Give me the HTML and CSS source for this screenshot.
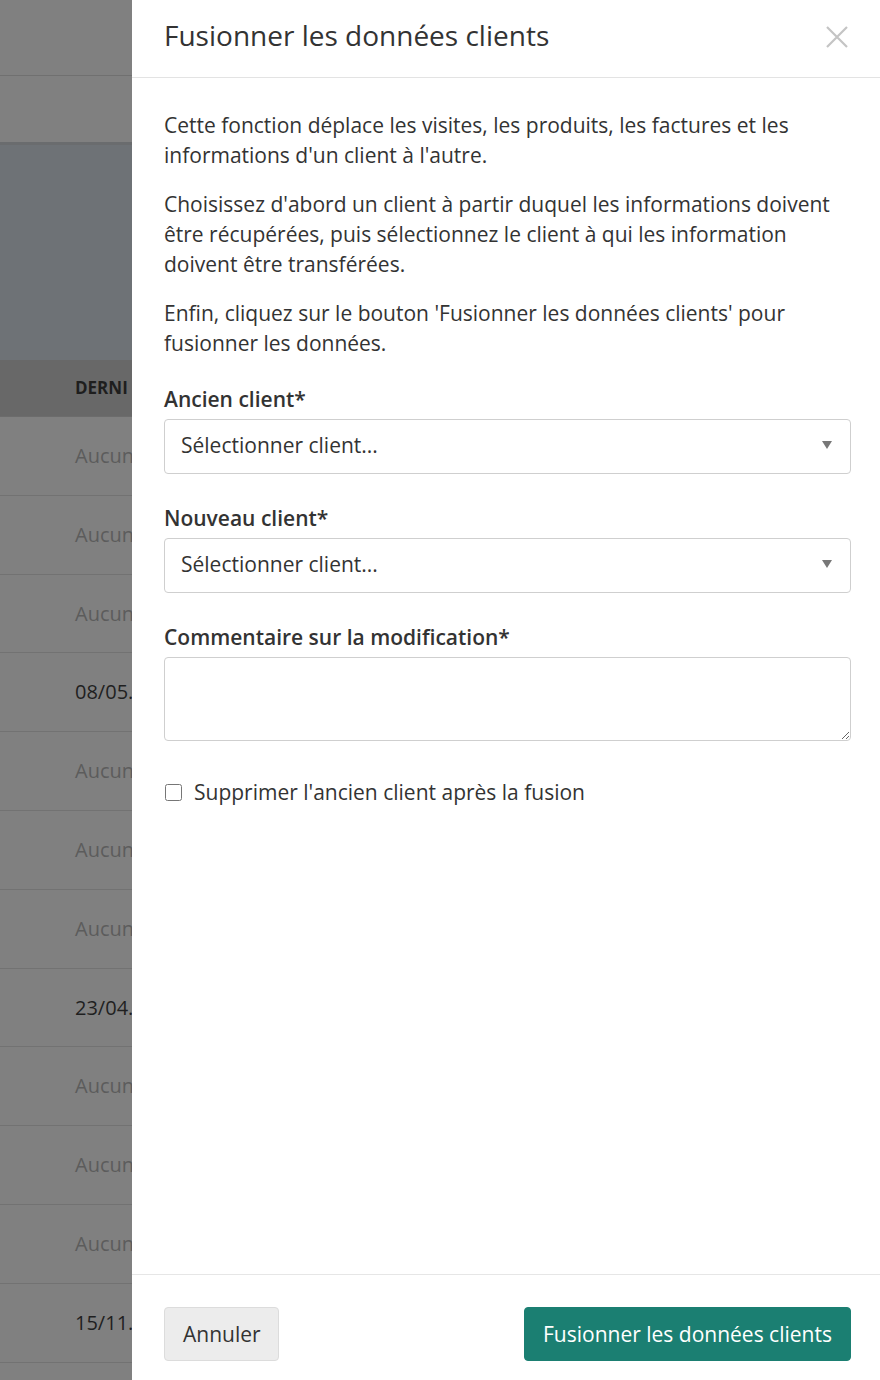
FILE: index.html
```html
<!DOCTYPE html>
<html lang="fr">
<head>
<meta charset="utf-8">
<title>Fusionner les données clients</title>
<link rel="stylesheet" href="styles.css">
</head>
<body>
<div class="backdrop">
  <div class="bg-top"></div>
  <div class="bg-bar"></div>
  <div class="bg-hero"></div>
  <div class="bg-head">DERNI</div>
  <div class="bg-row muted">Aucun</div>
  <div class="bg-row muted">Aucun</div>
  <div class="bg-row muted">Aucun</div>
  <div class="bg-row">08/05.</div>
  <div class="bg-row muted">Aucun</div>
  <div class="bg-row muted">Aucun</div>
  <div class="bg-row muted">Aucun</div>
  <div class="bg-row">23/04.</div>
  <div class="bg-row muted">Aucun</div>
  <div class="bg-row muted">Aucun</div>
  <div class="bg-row muted">Aucun</div>
  <div class="bg-row">15/11.</div>
</div>
<div class="panel">
  <div class="panel-header">
    <h1 class="panel-title">Fusionner les données clients</h1>
    <button class="close" aria-label="Fermer">
      <svg width="24" height="24" viewBox="0 0 24 24"><path d="M2 2L22 22M22 2L2 22" stroke="#c4c4c4" stroke-width="2.2" fill="none"/></svg>
    </button>
  </div>
  <div class="panel-body">
    <p class="text">Cette fonction déplace les visites, les produits, les factures et les informations d'un client à l'autre.</p>
    <p class="text">Choisissez d'abord un client à partir duquel les informations doivent être récupérées, puis sélectionnez le client à qui les information doivent être transférées.</p>
    <p class="text last">Enfin, cliquez sur le bouton 'Fusionner les données clients' pour fusionner les données.</p>

    <label class="field-label">Ancien client*</label>
    <div class="select"><span>Sélectionner client...</span><span class="caret"></span></div>

    <label class="field-label">Nouveau client*</label>
    <div class="select"><span>Sélectionner client...</span><span class="caret"></span></div>

    <label class="field-label">Commentaire sur la modification*</label>
    <textarea class="textarea"></textarea>

    <label class="check"><input type="checkbox" class="checkbox"><span>Supprimer l'ancien client après la fusion</span></label>
  </div>
  <div class="panel-footer">
    <button class="btn btn-cancel">Annuler</button>
    <button class="btn btn-primary">Fusionner les données clients</button>
  </div>
</div>
</body>
</html>
```
FILE: styles.css
```css
* { box-sizing: border-box; }
html, body { margin: 0; padding: 0; }
body {
  width: 880px;
  height: 1380px;
  overflow: hidden;
  display: flex;
  font-family: "Open Sans", "Noto Sans", sans-serif;
  color: #333;
}
.backdrop {
  width: 132px;
  flex: none;
  background: #808080;
  display: flex;
  flex-direction: column;
  overflow: hidden;
}
.bg-top { height: 76px; border-bottom: 1px solid #707070; flex: none; }
.bg-bar { height: 69px; border-bottom: 3px solid #6a6c6e; flex: none; }
.bg-hero { height: 215px; background: #6e7276; flex: none; }
.bg-head {
  height: 57px;
  flex: none;
  background: #686868;
  border-bottom: 1px solid #6c6c6c;
  padding-left: 75px;
  font-size: 17px;
  font-weight: 700;
  color: #1e1e1e;
  line-height: 56px;
  white-space: nowrap;
}
.bg-row {
  height: 78.8px;
  flex: none;
  border-bottom: 1px solid #727272;
  padding-left: 75px;
  font-size: 20px;
  line-height: 78px;
  color: #1f1f1f;
  white-space: nowrap;
}
.bg-row.muted { color: #5c5c5c; }

.panel {
  flex: 1;
  height: 1380px;
  background: #fff;
  display: flex;
  flex-direction: column;
}
.panel-header {
  height: 78px;
  flex: none;
  border-bottom: 1px solid #e3e3e3;
  display: flex;
  align-items: center;
  justify-content: space-between;
  padding: 0 31px 8px 32px;
}
.panel-title {
  margin: 0;
  font-size: 28px;
  font-weight: 400;
  color: #333;
}
.close {
  border: 0;
  background: none;
  padding: 0;
  width: 24px;
  height: 24px;
  display: flex;
  cursor: pointer;
  margin-top: 4px;
}
.panel-body {
  flex: 1;
  padding: 32px 29px 0 32px;
  display: flex;
  flex-direction: column;
}
.text {
  margin: 0 0 19px;
  font-size: 21px;
  line-height: 30px;
  color: #333;
}
.text.last { margin-bottom: 26px; }
.field-label {
  font-size: 21px;
  line-height: 30px;
  font-weight: 600;
  color: #333;
  margin-bottom: 5px;
}
.select {
  height: 55px;
  border: 1px solid #cfcfcf;
  border-radius: 4px;
  display: flex;
  align-items: center;
  justify-content: space-between;
  padding: 0 18px 3px 16px;
  font-size: 21px;
  color: #333;
  margin-bottom: 29px;
}
.caret {
  width: 0;
  height: 0;
  border-left: 5px solid transparent;
  border-right: 5px solid transparent;
  border-top: 8px solid #777;
}
.textarea {
  height: 84px;
  border: 1px solid #cfcfcf;
  border-radius: 4px;
  resize: vertical;
  font-family: inherit;
  font-size: 21px;
  margin: 0 0 36px;
  padding: 8px 16px;
}
.check {
  display: flex;
  align-items: center;
  font-size: 21px;
  line-height: 30px;
  color: #333;
}
.checkbox {
  width: 17px;
  height: 17px;
  margin: 0 12px 0 1px;
}
.panel-footer {
  height: 106px;
  flex: none;
  border-top: 1px solid #e6e6e6;
  display: flex;
  justify-content: space-between;
  align-items: flex-start;
  padding: 32px 29px 0 32px;
}
.btn {
  height: 54px;
  font-family: inherit;
  font-size: 21px;
  border-radius: 4px;
  cursor: pointer;
  white-space: nowrap;
}
.btn-cancel {
  background: #ececec;
  border: 1px solid #dcdcdc;
  color: #333;
  padding: 0 18px;
  width: 115px;
}
.btn-primary {
  background: #1b7f72;
  border: 1px solid #1b7f72;
  color: #fff;
  padding: 0 18px;
  width: 327px;
}
```
